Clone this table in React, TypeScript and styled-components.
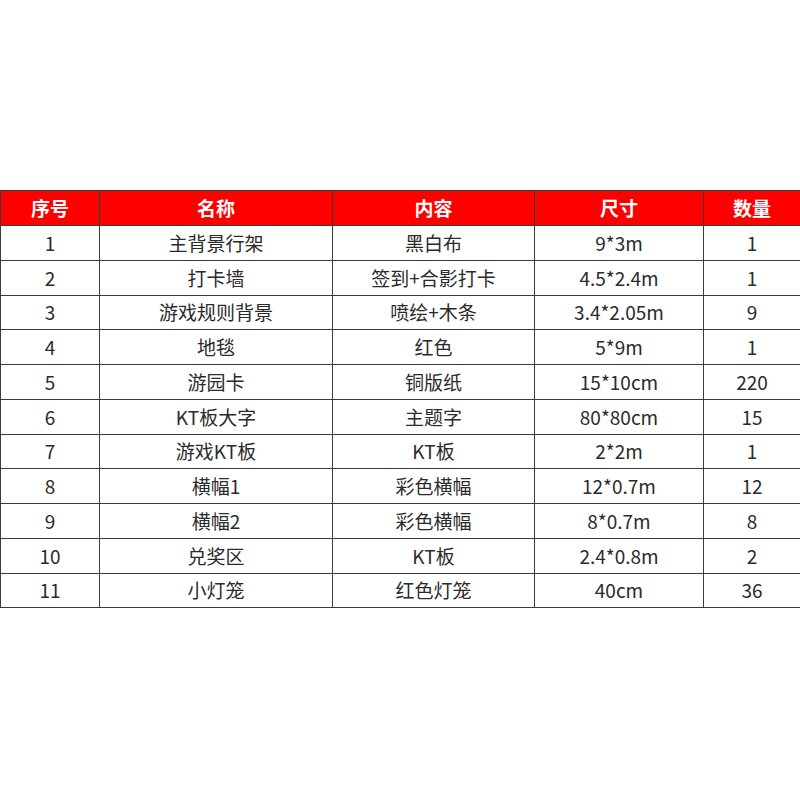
import styled, { createGlobalStyle } from "styled-components";

const GlobalStyle = createGlobalStyle`
  html, body {
    margin: 0;
    padding: 0;
    background: #ffffff;
  }
  body {
    font-family: "Noto Sans CJK SC", "Noto Sans", sans-serif;
  }
`;

const Page = styled.div`
  width: 800px;
  height: 800px;
  padding-top: 190px;
  box-sizing: border-box;
  background: #fff;
`;

const Table = styled.table`
  width: 800px;
  border-collapse: collapse;
  table-layout: fixed;
  color: #2b2b2b;
  font-size: 19px;
`;

const Col = styled.col<{ w: number }>`
  width: ${(p) => p.w}px;
`;

const HeadCell = styled.th`
  background: #ff0000;
  color: #fff;
  font-weight: 700;
  height: 33px;
  padding: 0 0 1px;
  text-align: center;
  border: 1.5px solid #3a3a3a;
  line-height: 1;
`;

const Cell = styled.td`
  height: 32.75px;
  padding: 0 0 1px;
  text-align: center;
  border: 1.5px solid #3a3a3a;
  line-height: 1;
`;

const rows: string[][] = [
  ["1", "主背景行架", "黑白布", "9*3m", "1"],
  ["2", "打卡墙", "签到+合影打卡", "4.5*2.4m", "1"],
  ["3", "游戏规则背景", "喷绘+木条", "3.4*2.05m", "9"],
  ["4", "地毯", "红色", "5*9m", "1"],
  ["5", "游园卡", "铜版纸", "15*10cm", "220"],
  ["6", "KT板大字", "主题字", "80*80cm", "15"],
  ["7", "游戏KT板", "KT板", "2*2m", "1"],
  ["8", "横幅1", "彩色横幅", "12*0.7m", "12"],
  ["9", "横幅2", "彩色横幅", "8*0.7m", "8"],
  ["10", "兑奖区", "KT板", "2.4*0.8m", "2"],
  ["11", "小灯笼", "红色灯笼", "40cm", "36"],
];

const widths = [99, 233, 202, 169, 97];
const heads = ["序号", "名称", "内容", "尺寸", "数量"];

export default function App() {
  return (
    <>
      <GlobalStyle />
      <Page>
        <Table>
          <colgroup>
            {widths.map((w, i) => (
              <Col key={i} w={w} />
            ))}
          </colgroup>
          <thead>
            <tr>
              {heads.map((h) => (
                <HeadCell key={h}>{h}</HeadCell>
              ))}
            </tr>
          </thead>
          <tbody>
            {rows.map((r) => (
              <tr key={r[0]}>
                {r.map((c, i) => (
                  <Cell key={i}>{c}</Cell>
                ))}
              </tr>
            ))}
          </tbody>
        </Table>
      </Page>
    </>
  );
}
